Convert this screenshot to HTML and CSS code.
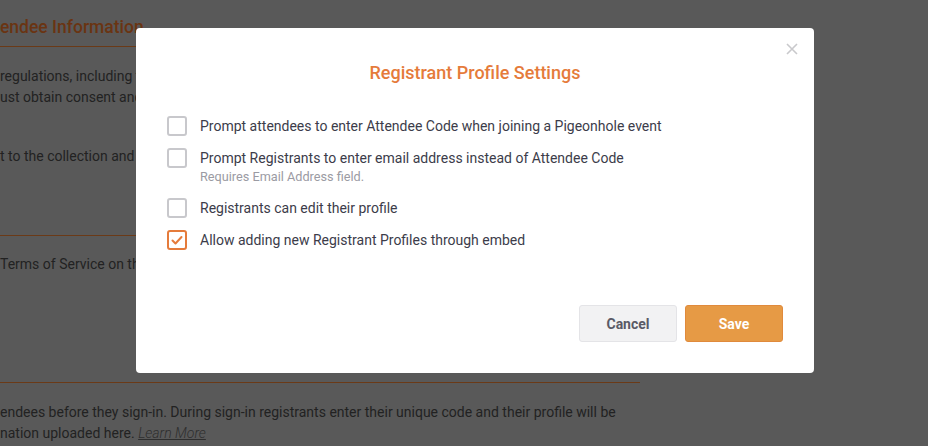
FILE: index.html
```html
<!DOCTYPE html>
<html lang="en">
<head>
<meta charset="utf-8">
<title>Registrant Profile Settings</title>
<link rel="stylesheet" href="styles.css">
</head>
<body>
<div class="page">
  <h2 class="section-title">endee Information</h2>
  <p class="para p1">regulations, including the General Data Protection Regulation<br>ust obtain consent and provide notice to attendees</p>
  <p class="para p2">t to the collection and processing of personal data</p>
  <hr class="rule r2">
  <p class="para p3">Terms of Service on the event page</p>
  <hr class="rule r3">
  <p class="para p4">endees before they sign-in. During sign-in registrants enter their unique code and their profile will be<br>nation uploaded here. <a class="learn" href="#">Learn More</a></p>
</div>

<div class="overlay">
  <div class="modal">
    <button class="close" aria-label="Close">
      <svg width="12" height="12" viewBox="0 0 12 12"><path d="M1 1L11 11M11 1L1 11" stroke="#c9c9cc" stroke-width="1.6" fill="none"/></svg>
    </button>
    <h3 class="modal-title">Registrant Profile Settings</h3>
    <div class="options">
      <label class="option">
        <span class="box"></span>
        <span class="opt-text"><span class="opt-label">Prompt attendees to enter Attendee Code when joining a Pigeonhole event</span></span>
      </label>
      <label class="option">
        <span class="box"></span>
        <span class="opt-text">
          <span class="opt-label">Prompt Registrants to enter email address instead of Attendee Code</span>
          <span class="hint">Requires Email Address field.</span>
        </span>
      </label>
      <label class="option">
        <span class="box"></span>
        <span class="opt-text"><span class="opt-label">Registrants can edit their profile</span></span>
      </label>
      <label class="option">
        <span class="box checked">
          <svg width="14" height="12" viewBox="0 0 14 12"><path d="M2.5 6.5L5.5 9.5L11.5 3" stroke="#e57b3b" stroke-width="2" fill="none" stroke-linecap="round" stroke-linejoin="round"/></svg>
        </span>
        <span class="opt-text"><span class="opt-label">Allow adding new Registrant Profiles through embed</span></span>
      </label>
    </div>
    <div class="actions">
      <button class="btn btn-cancel">Cancel</button>
      <button class="btn btn-save">Save</button>
    </div>
  </div>
</div>
</body>
</html>
```

FILE: styles.css
```css
html, body {
  margin: 0;
  padding: 0;
  height: 100%;
  overflow: hidden;
}
body {
  background: #595959;
  font-family: Roboto, "Liberation Sans", sans-serif;
}
.page {
  width: 640px;
  padding-top: 15px;
}
.section-title {
  margin: 0;
  font-size: 17.5px;
  font-weight: 500;
  line-height: 24px;
  color: #6a3412;
  padding-bottom: 7px;
  border-bottom: 1px solid #6b3a17;
  white-space: nowrap;
}
.para {
  margin: 0;
  font-size: 14px;
  line-height: 21px;
  color: #222;
  white-space: nowrap;
}
.p1 { margin-top: 19px; }
.p2 { margin-top: 38px; }
.rule {
  margin: 0;
  border: 0;
  height: 1px;
  background: #6b3a17;
}
.r2 { margin-top: 68px; }
.p3 { margin-top: 18px; }
.r3 { margin-top: 107px; }
.p4 { margin-top: 19px; }
.learn {
  color: #2e2e2e;
  font-style: italic;
  font-weight: 300;
}

.overlay {
  position: fixed;
  inset: 0;
}
.modal {
  position: absolute;
  left: 136px;
  top: 28px;
  width: 678px;
  box-sizing: border-box;
  background: #fff;
  border-radius: 4px;
  padding: 33px 31px 31px;
  display: flex;
  flex-direction: column;
}
.close {
  position: absolute;
  top: 15px;
  right: 16px;
  border: 0;
  background: none;
  padding: 0;
  width: 12px;
  height: 12px;
  cursor: pointer;
}
.close svg { display: block; }
.modal-title {
  margin: 0;
  text-align: center;
  font-size: 18px;
  font-weight: 500;
  line-height: 24px;
  color: #e57b3b;
}
.options {
  margin-top: 31px;
  display: flex;
  flex-direction: column;
  gap: 12px;
}
.option {
  display: flex;
  align-items: flex-start;
  gap: 13px;
  font-size: 14px;
  line-height: 20px;
  color: #3c3c4a;
}
.box {
  flex: none;
  width: 20px;
  height: 20px;
  box-sizing: border-box;
  border: 2px solid #c8c8cc;
  border-radius: 3px;
  display: flex;
  align-items: center;
  justify-content: center;
}
.box.checked {
  border-color: #e57b3b;
}
.opt-text {
  display: flex;
  flex-direction: column;
}
.opt-label {
  display: block;
}
.hint {
  display: block;
  font-size: 12.7px;
  line-height: 18px;
  color: #9b9ba3;
}
.actions {
  margin-top: 55px;
  display: flex;
  justify-content: flex-end;
  gap: 8px;
}
.btn {
  width: 98px;
  height: 37px;
  border-radius: 3px;
  font-family: Roboto, "Liberation Sans", sans-serif;
  font-size: 14px;
  font-weight: 700;
  cursor: pointer;
}
.btn-cancel {
  background: #f2f2f3;
  border: 1px solid #e4e4e7;
  color: #5a5a66;
}
.btn-save {
  background: #e69a45;
  border: 1px solid #e08a3c;
  color: #fff;
}
```
